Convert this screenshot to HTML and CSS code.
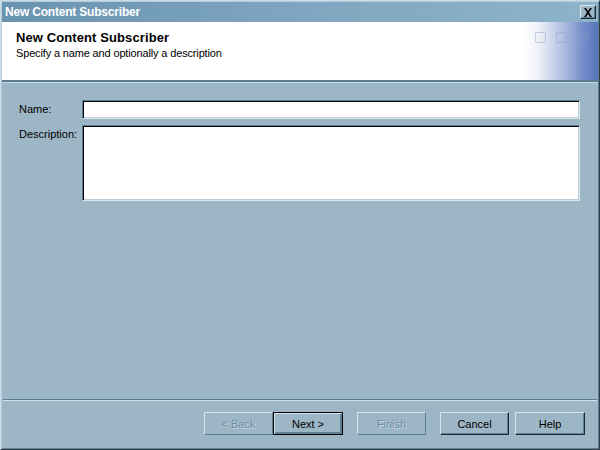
FILE: index.html
```html
<!DOCTYPE html>
<html>
<head>
<meta charset="utf-8">
<link rel="stylesheet" href="styles.css">
</head>
<body>
<div class="window">
  <div class="titlebar">
    <span class="title">New Content Subscriber</span>
    <span class="close">
      <svg width="10" height="9" viewBox="0 0 10 9"><path d="M1 0h2l2 3 2-3h2L6 4.5 9 9H7L5 6 3 9H1l3-4.5z" fill="#000"/></svg>
    </span>
  </div>
  <div class="header">
    <div class="header-text">
      <div class="h-title">New Content Subscriber</div>
      <div class="h-sub">Specify a name and optionally a description</div>
    </div>
    <div class="header-art">
      <span class="sq"></span><span class="sq"></span><span class="sq"></span>
    </div>
  </div>
  <div class="content">
    <div class="form">
      <label class="lbl lbl-name">Name:</label>
      <div class="field input"></div>
      <label class="lbl">Description:</label>
      <div class="field textarea"></div>
    </div>
  </div>
  <div class="separator"></div>
  <div class="footer">
    <button class="btn disabled">&lt; Back</button>
    <button class="btn default">Next &gt;</button>
    <button class="btn disabled gap">Finish</button>
    <button class="btn gap">Cancel</button>
    <button class="btn gap-s">Help</button>
  </div>
</div>
</body>
</html>
```

FILE: styles.css
```css
* { box-sizing: border-box; }
html, body { margin: 0; padding: 0; }
body {
  width: 600px;
  height: 450px;
  background: #9db6c6;
  font-family: "Liberation Sans", Arial, sans-serif;
  font-size: 11px;
  color: #000;
}
.window {
  width: 600px;
  height: 450px;
  display: flex;
  flex-direction: column;
  background: #9db6c6;
  border-top: 1px solid #c9dbe6;
  border-left: 1px solid #c9dbe6;
  border-right: 1px solid #2c3e4c;
  border-bottom: 1px solid #2c3e4c;
  box-shadow: inset 1px 1px 0 #b7cddb, inset -1px -1px 0 #5f7f96;
}
.titlebar {
  height: 20px;
  margin: 1px 1px 0 1px;
  display: flex;
  align-items: center;
  padding-left: 3px;
  padding-right: 2px;
  background: linear-gradient(to right, #6a93b0 0%, #7ea6c0 50%, #8db4ca 100%);
}
.title {
  color: #fff;
  font-weight: bold;
  font-size: 12px;
  letter-spacing: -0.2px;
}
.close {
  margin-left: auto;
  width: 16px;
  height: 14px;
  display: flex;
  align-items: center;
  justify-content: center;
  background: #9db6c6;
  border-top: 1px solid #dbe7ee;
  border-left: 1px solid #dbe7ee;
  border-right: 1px solid #1d2a33;
  border-bottom: 1px solid #1d2a33;
  box-shadow: inset -1px -1px 0 #5f7f96;
}
.header {
  height: 60px;
  margin: 0 1px;
  display: flex;
  background: #fff;
  border-bottom: 2px solid #5a7c93;
  box-shadow: 0 1px 0 #c3d6e2;
}
.header-text {
  flex: 1;
  padding: 8px 0 0 14px;
}
.h-title {
  font-weight: bold;
  font-size: 13px;
  line-height: 15px;
  letter-spacing: 0.1px;
}
.h-sub {
  font-size: 11px;
  line-height: 14px;
  margin-top: 1px;
  letter-spacing: -0.15px;
}
.header-art {
  width: 74px;
  display: flex;
  gap: 10px;
  padding: 10px 0 0 11px;
  background: linear-gradient(to right, #ffffff 0%, #eef1f9 20%, #b4c2e4 50%, #7890cb 78%, #5674ba 100%);
}
.sq {
  width: 11px;
  height: 11px;
  border: 1px solid rgba(140, 160, 200, 0.45);
  border-radius: 1px;
}
.content {
  flex: 1;
  padding: 18px 19px 0 18px;
}
.form {
  display: grid;
  grid-template-columns: 63px 1fr;
  row-gap: 6px;
}
.lbl {
  padding-top: 3px;
}
.field {
  background: #fff;
  border-top: 1px solid #5f7f96;
  border-left: 1px solid #5f7f96;
  border-right: 1px solid #dbe7ee;
  border-bottom: 1px solid #dbe7ee;
  box-shadow: inset 1px 1px 0 #000, inset -1px -1px 0 #b9ccd8;
}
.input { height: 19px; }
.textarea { height: 76px; }
.separator {
  height: 2px;
  margin: 0 2px;
  border-top: 1px solid #5a7c93;
  border-bottom: 1px solid #d0e0ea;
}
.footer {
  height: 48px;
  display: flex;
  justify-content: flex-end;
  padding: 11px 14px 0 0;
}
.btn {
  width: 69px;
  height: 23px;
  font-family: "Liberation Sans", Arial, sans-serif;
  font-size: 11px;
  color: #000;
  background: #9db6c6;
  border-top: 1px solid #d6e4ec;
  border-left: 1px solid #d6e4ec;
  border-right: 1px solid #1d2a33;
  border-bottom: 1px solid #1d2a33;
  box-shadow: inset -1px -1px 0 #5f7f96;
  padding: 0;
  margin: 0;
}
.btn.default {
  width: 70px;
  border: 1px solid #000;
  box-shadow: inset 1px 1px 0 #d6e4ec, inset -2px -2px 0 #5f7f96;
}
.btn.disabled {
  color: #6e8ea3;
  text-shadow: 1px 1px 0 #c6d8e3;
  border-right-color: #5f7f96;
  border-bottom-color: #5f7f96;
  box-shadow: none;
}
.gap { margin-left: 14px; }
.gap-s { margin-left: 6px; width: 70px; }
```
